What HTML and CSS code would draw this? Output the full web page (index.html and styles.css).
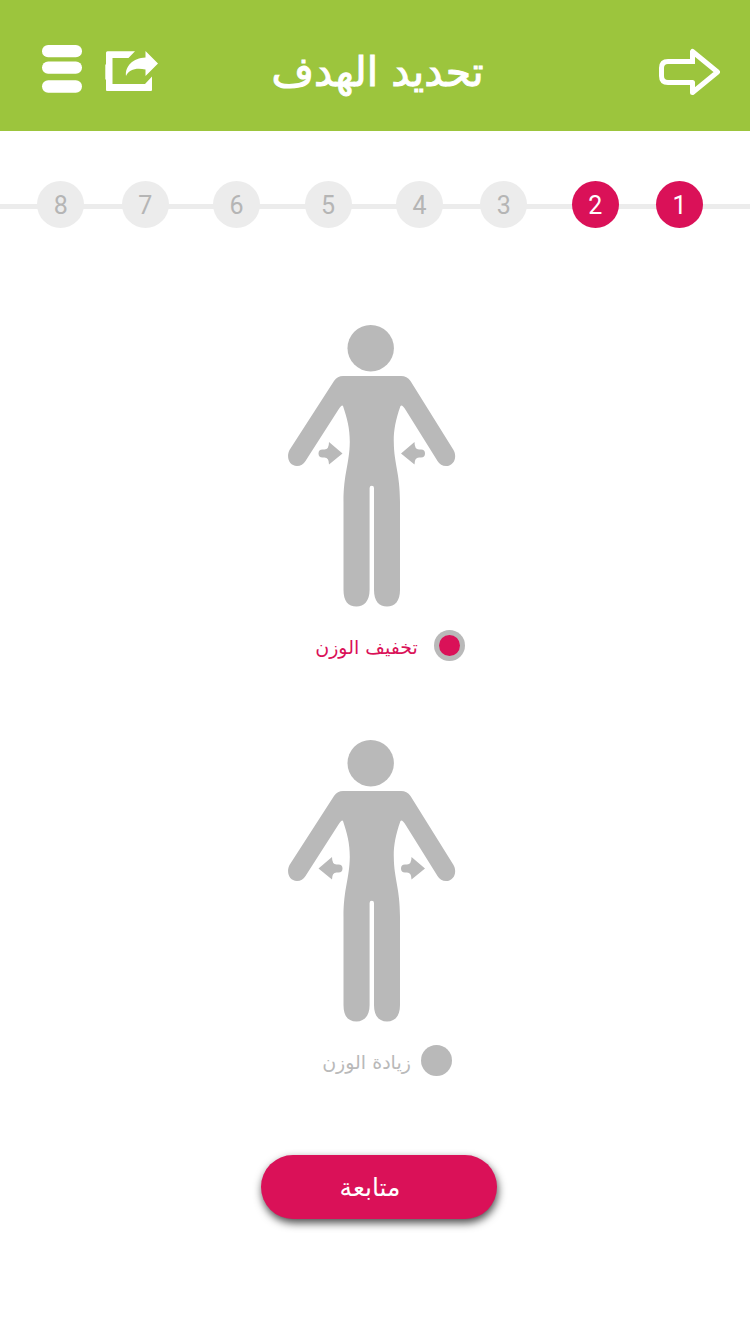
FILE: index.html
```html
<!DOCTYPE html>
<html lang="ar" dir="rtl">
<head>
  <meta charset="utf-8">
  <meta name="viewport" content="width=device-width, initial-scale=1">
  <title>تحديد الهدف</title>
  <link rel="stylesheet" href="styles.css">
</head>
<body>
  <header class="topbar">
    <button class="icon-button" type="button" aria-label="رجوع">
      <svg width="62" height="48" viewBox="658 48 62 48" fill="none" stroke="#fff" stroke-width="5" stroke-linejoin="round" stroke-linecap="butt">
        <path d="M695 61.500H668Q661.500 61.500 661.500 68V76Q661.500 82.500 668 82.500H692.500V92.500L717.500 72L692.500 51.500V64"/>
      </svg>
    </button>
    <h1 class="topbar-title">تحديد الهدف</h1>
    <div class="topbar-actions">
      <button class="icon-button" type="button" aria-label="مشاركة">
        <svg width="54" height="50" viewBox="105 44 54 50" fill="#fff">
          <path d="M107.500 51.300H135L128.500 58H112.500V84H145L152 76.500V90Q152 91 151 91H107Q106 91 106 90V80L105.300 79V65L106 64V52.800Q106 51.300 107.500 51.300Z"/>
          <path d="M145.500 51L158 63.500L145.500 76V69.500C136 67.500 129 69.500 126 76C125 66 133 58 145.500 57.500Z"/>
        </svg>
      </button>
      <button class="icon-button" type="button" aria-label="القائمة">
        <svg width="42" height="50" viewBox="41 44 42 50" fill="#fff">
          <rect x="42" y="45" width="40" height="12.300" rx="6.100"/>
          <rect x="42" y="61.500" width="40" height="12.300" rx="6.100"/>
          <rect x="42" y="80.300" width="40" height="12.500" rx="6.200"/>
        </svg>
      </button>
    </div>
  </header>

  <main>
    <ol class="steps">
      <li class="step step-narrow"><span class="dot dot-done">1</span></li>
      <li class="step step-wide"><span class="dot dot-done" aria-current="step">2</span></li>
      <li class="step step-narrow"><span class="dot">3</span></li>
      <li class="step step-wide"><span class="dot">4</span></li>
      <li class="step step-wide"><span class="dot">5</span></li>
      <li class="step step-wide"><span class="dot">6</span></li>
      <li class="step step-narrow"><span class="dot">7</span></li>
      <li class="step step-narrow"><span class="dot">8</span></li>
    </ol>

    <form class="goal-form">
      <svg class="defs" width="0" height="0" aria-hidden="true">
        <defs>
          <g id="person">
            <circle cx="82.700" cy="23.200" r="23.200"/>
            <path d="M55 51H113Q119 51 122.500 56L165.500 125C169.500 132 166 141 158 141Q152.500 141 149.500 136L118 85.500Q114 79 112.500 81C107 96 105.500 108 105.800 117C106 139 112 148 112 177V265C112 276 107 281.500 99 281.500C91 281.500 86 276 86 265V163A2.200 2.200 0 0 0 81.600 163V265C81.600 276 76 281.500 68.500 281.500C60 281.500 55.500 276 55.500 265V177C55.500 148 61.500 139 61.800 117C61.800 103 59 93 55 81Q54 79 50.500 84.500L17.500 136Q14.500 141 9 141C1 141-2 132 1.500 125L46 56Q49.500 51 55 51Z"/>
          </g>
          <path id="arrow" d="M12 0L-1.500-11.500Q-1.500-4-6-4H-8A4 4 0 0 0-8 4H-6Q-1.500 4-1.500 11Z"/>
        </defs>
      </svg>

      <label class="option">
        <svg class="figure" viewBox="0 0 168 282" width="168" height="282" aria-hidden="true">
          <use href="#person"/>
          <use href="#arrow" transform="translate(42.500 128.500)"/>
          <use href="#arrow" transform="translate(125 128.500) scale(-1 1)"/>
        </svg>
        <span class="choice">
          <input class="radio" type="radio" name="goal" value="lose" checked>
          <span class="choice-text">تخفيف الوزن</span>
        </span>
      </label>

      <label class="option">
        <svg class="figure" viewBox="0 0 168 282" width="168" height="282" aria-hidden="true">
          <use href="#person"/>
          <use href="#arrow" transform="translate(42.500 128.500) scale(-1 1)"/>
          <use href="#arrow" transform="translate(125 128.500)"/>
        </svg>
        <span class="choice choice-tight">
          <input class="radio" type="radio" name="goal" value="gain">
          <span class="choice-text">زيادة الوزن</span>
        </span>
      </label>

      <button class="submit" type="submit">متابعة</button>
    </form>
  </main>
</body>
</html>
```
FILE: styles.css
```css
* {
  box-sizing: border-box;
}

body {
  margin: 0;
  background: #fff;
  font-family: "DejaVu Sans", sans-serif;
}

button {
  border: 0;
  font-family: inherit;
  cursor: pointer;
}

.topbar {
  display: grid;
  grid-template-columns: 1fr auto 1fr;
  align-items: center;
  min-height: 131px;
  padding: 12px 30px 0 41px;
  background: #9cc53d;
  color: #fff;
}

.icon-button {
  display: block;
  justify-self: start;
  padding: 0;
  background: none;
}

.icon-button svg {
  display: block;
}

.topbar-title {
  margin: 0;
  padding-right: 6px;
  font-size: 41px;
  font-weight: 400;
  line-height: 56px;
  -webkit-text-stroke: 1px currentColor;
}

.topbar-actions {
  display: flex;
  align-items: center;
  gap: 22px;
  justify-self: end;
  padding-bottom: 5px;
}

.steps {
  display: flex;
  margin: 50px 0 0;
  padding: 0 47px 0 0;
  list-style: none;
  background: linear-gradient(#ececec, #ececec) 0 23px / 100% 5px no-repeat;
}

.step-narrow {
  flex: 37 0 47px;
}

.step-wide {
  flex: 44 0 47px;
}

.dot {
  display: block;
  width: 47px;
  height: 47px;
  border-radius: 50%;
  background: #ececec;
  color: #b5b5b5;
  font-family: Roboto, sans-serif;
  font-size: 25px;
  line-height: 50px;
  text-align: center;
}

.dot-done {
  background: #da1158;
  color: #fff;
}

.goal-form {
  display: flex;
  flex-direction: column;
  align-items: center;
  gap: 79px;
  padding: 97px 0 64px;
}

.defs {
  position: absolute;
}

.option {
  display: flex;
  flex-direction: column;
  align-items: center;
  gap: 22px;
  padding-right: 6px;
  color: #b9b9b9;
  cursor: pointer;
}

.figure {
  fill: #b9b9b9;
}

.choice {
  display: flex;
  align-items: center;
  gap: 16px;
  height: 32px;
  padding-left: 36px;
}

.choice-tight {
  gap: 10px;
  padding-left: 30px;
}

.radio {
  display: grid;
  place-items: center;
  appearance: none;
  width: 31px;
  height: 31px;
  margin: 0;
  border-radius: 50%;
  background: #b9b9b9;
}

.radio:checked::before {
  content: "";
  width: 21px;
  height: 21px;
  border-radius: 50%;
  background: #da1158;
}

.radio:checked + .choice-text {
  color: #da1158;
}

.choice-text {
  padding-top: 4px;
  font-size: 19px;
  line-height: 28px;
}

.submit {
  width: 236px;
  height: 64px;
  margin-left: 8px;
  padding: 0 18px 0 0;
  border-radius: 32px;
  background: #da1158;
  box-shadow: 1px 4px 8px rgba(0, 0, 0, 0.7);
  color: #fff;
  font-size: 25px;
}
```
